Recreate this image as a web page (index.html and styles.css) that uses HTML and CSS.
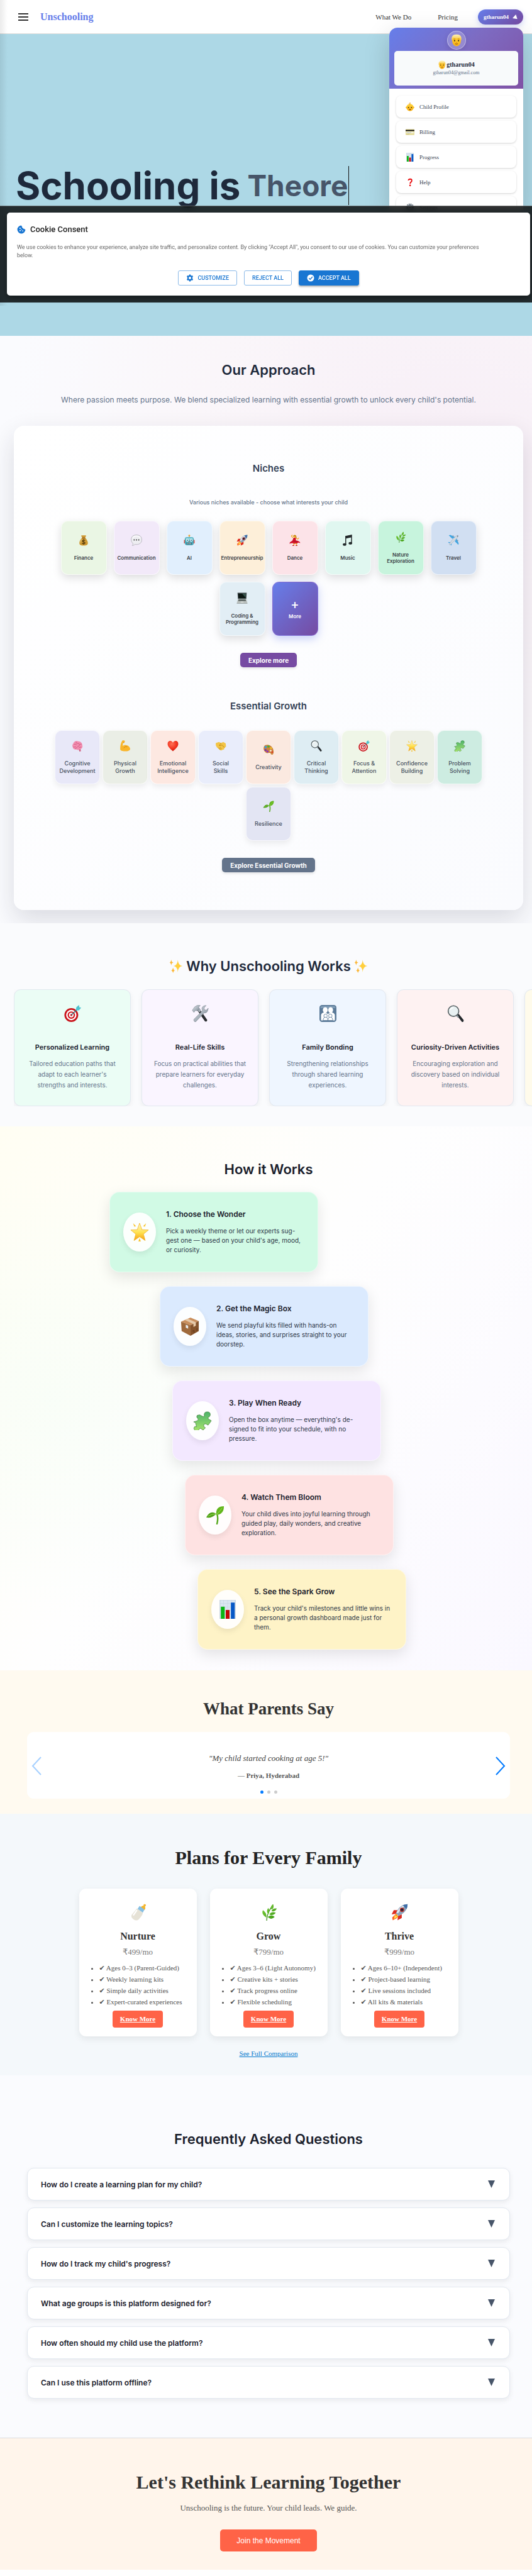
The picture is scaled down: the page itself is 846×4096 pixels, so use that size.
FILE: index.html
```html
<!DOCTYPE html>
<html lang="en">
<head>
<meta charset="utf-8">
<meta name="viewport" content="width=device-width, initial-scale=1">
<title>Unschooling</title>
<link rel="stylesheet" href="styles.css">
</head>
<body>
<svg class="sprite" aria-hidden="true">
  <defs>
    <linearGradient id="skin" x1="0" y1="0" x2="0" y2="1"><stop offset="0" stop-color="#ffd53e"/><stop offset="1" stop-color="#f8b113"/></linearGradient>
    <linearGradient id="hair" x1="0" y1="0" x2="0" y2="1"><stop offset="0" stop-color="#fff3b8"/><stop offset="1" stop-color="#f3bd35"/></linearGradient>
    <linearGradient id="leaf" x1="0" y1="0" x2="1" y2="1"><stop offset="0" stop-color="#7fd03a"/><stop offset="1" stop-color="#3c9a17"/></linearGradient>
    <linearGradient id="gold" x1="0" y1="0" x2="0" y2="1"><stop offset="0" stop-color="#fffbd0"/><stop offset=".55" stop-color="#ffe14d"/><stop offset="1" stop-color="#f59c12"/></linearGradient>
    <linearGradient id="steel" x1="0" y1="0" x2="1" y2="1"><stop offset="0" stop-color="#dfe6ec"/><stop offset="1" stop-color="#76828e"/></linearGradient>
    <linearGradient id="jig" x1="0" y1="0" x2="0" y2="1"><stop offset="0" stop-color="#4db36b"/><stop offset="1" stop-color="#a6e36c"/></linearGradient>
    <radialGradient id="redheart" cx=".4" cy=".3" r=".8"><stop offset="0" stop-color="#ff7256"/><stop offset=".6" stop-color="#f0301c"/><stop offset="1" stop-color="#b8120a"/></radialGradient>
  </defs>
  <symbol id="man" viewBox="0 0 32 32"><path d="M5 17V12C5 5 9 2 16 2s11 3 11 10v5c0 8-5 14-11 14S5 25 5 17z" fill="url(#skin)"/><path d="M4 16C2 6 7 1 16 1s14 5 12 15l-2 1c0-4-1-6-2-7-5 1-11 1-16-1-1 2-2 4-2 8z" fill="url(#hair)"/><circle cx="11" cy="17" r="1.7" fill="#3d2a12"/><circle cx="21" cy="17" r="1.7" fill="#3d2a12"/><path d="M8.500 13.500q2-1.500 4.500-.5M19 13q2.500-1 4.500.5" stroke="#b9791a" stroke-width="1.300" fill="none"/><path d="M14.500 21.500h3" stroke="#d98d16" stroke-width="1.400"/><path d="M12.500 25q3.500 1.500 7 0" stroke="#8a3b12" stroke-width="1.500" fill="none"/></symbol>
  <symbol id="baby" viewBox="0 0 32 32"><circle cx="3.500" cy="18" r="3" fill="#f8b113"/><circle cx="28.500" cy="18" r="3" fill="#f8b113"/><circle cx="16" cy="18" r="13" fill="url(#skin)"/><path d="M16 8c-5-1-4-7 1-7-2 2-1 4 2 4" stroke="#e89a16" stroke-width="1.800" fill="none"/><circle cx="10.500" cy="18" r="2" fill="#3d2a12"/><circle cx="21.500" cy="18" r="2" fill="#3d2a12"/><path d="M12.500 24h7q-1 4-3.500 4t-3.500-4z" fill="#7c2d12"/></symbol>
  <symbol id="card" viewBox="0 0 32 32"><rect x="0" y="5" width="32" height="22" rx="2" fill="#e6dd9c"/><path d="M0 8h32v4.500H0z" fill="#111"/><rect x="3" y="15" width="26" height="5" fill="#f7f5e4"/><path d="M5 18q2-3 3 0t3 0 3 0 3 0 3 0" stroke="#5373b4" fill="none"/><path d="M3 23.500h10" stroke="#b4a862"/></symbol>
  <symbol id="chart" viewBox="0 0 32 32"><rect x="3" y="0" width="26" height="32" fill="#dbe7f2" stroke="#b9c9d8"/><path d="M3 6h26M3 12h26M3 18h26M3 24h26M9 0v32M16 0v32M23 0v32" stroke="#c4d3e1" stroke-width=".6"/><path d="M4.500 11.500h6.500V32H4.500z" fill="#0bb515"/><path d="M12.800 17h6.400v15h-6.400z" fill="#c20808"/><path d="M21.500 4.500H28V32h-6.500z" fill="#0758c6"/></symbol>
  <symbol id="question" viewBox="0 0 32 32"><path d="M10 9q1-5 6.500-5 6 0 6 5.500 0 3-3 5.500t-3 6" stroke="#e8090b" stroke-width="4.200" fill="none"/><circle cx="16.300" cy="27" r="3" fill="#e8090b"/></symbol>
  <symbol id="gear" viewBox="0 0 32 32"><circle cx="16" cy="16" r="12" fill="none" stroke="#7c8790" stroke-width="6" stroke-dasharray="4.200 2.080"/><circle cx="16" cy="16" r="8.500" fill="none" stroke="#64707b" stroke-width="4"/><circle cx="16" cy="16" r="3" fill="#4a545d"/></symbol>
  <symbol id="money" viewBox="0 0 32 32"><path d="M12 9c-1-3-3-4-3-6 3-2 5 0 7-1 2 1 4-1 7 1 0 2-2 3-3 6 5 5 8 10 8 15 0 5-3 7-12 7S4 29 4 24c0-5 3-10 8-15z" fill="#cf9a34"/><path d="M11.500 8.500h9v2.500h-9z" fill="#8c5a17"/><path d="M8 22c0-4 2-7 4-9" stroke="#eecb72" stroke-width="1.800" fill="none"/><path d="M20 17c-1-2-8-2.500-8 1s8 2 8 5.500-7 3.500-8.500.5M16 13.500v15" stroke="#4a3208" stroke-width="1.900" fill="none"/></symbol>
  <symbol id="speech" viewBox="0 0 32 32"><path d="M16 1c9 0 15 5 15 13.500S25 28 16 28q-2 0-4-.5Q9 31 4 31q3-3 2-6-5-4-5-10.500C1 6 7 1 16 1z" fill="#eeeef2" stroke="#a5a4ad" stroke-width="1.200"/><path d="M5 11Q8 4 16 4t11 6" stroke="#fff" stroke-width="2" fill="none"/><circle cx="9.500" cy="15" r="1.700" fill="#333"/><circle cx="16" cy="15" r="1.700" fill="#333"/><circle cx="22.500" cy="15" r="1.700" fill="#333"/></symbol>
  <symbol id="robot" viewBox="0 0 32 32"><path d="M15 3h2v5h-2z" fill="#8896a2"/><circle cx="16" cy="3" r="2.600" fill="#f3a42b"/><path d="M1 15h4v10H1zM27 15h4v10h-4z" fill="#d95247"/><rect x="3.500" y="7" width="25" height="23" rx="6" fill="#4aa7b8"/><rect x="5.500" y="8.500" width="21" height="6" rx="3" fill="#84cfd9"/><circle cx="10.500" cy="16" r="4" fill="#e9fbff"/><circle cx="21.500" cy="16" r="4" fill="#e9fbff"/><circle cx="10.500" cy="16" r="1.900" fill="#13697e"/><circle cx="21.500" cy="16" r="1.900" fill="#13697e"/><path d="M16 18l2 3h-4z" fill="#d95247"/><rect x="9" y="23" width="14" height="4.500" rx="1" fill="#274f5b"/><path d="M12 23v4.500M16 23v4.500M20 23v4.500" stroke="#fff" stroke-width="1.500"/></symbol>
  <symbol id="rocket" viewBox="0 0 32 32"><path d="M10 18L3 31l11-6z" fill="#ffab1a"/><path d="M9 19L2 26l1 5 8-4z" fill="#ff5a1f"/><path d="M7 21l-2 8 7-4z" fill="#ffe04d"/><path d="M12 12L5 12 1 20l8-1zM20 20v7l-8 4 1-8z" fill="#dc2a1e"/><path d="M31 1c-9 0-17 5-22 17l5 5C26 18 31 10 31 1z" fill="#8ba3bb"/><path d="M31 1C23 2 15 7 10 17l3 1C18 11 24 5 31 1z" fill="#e0eaf2"/><path d="M31 1q-5 0-9 2l7 7q2-4 2-9z" fill="#3d6ea8"/><circle cx="20.500" cy="11.500" r="4" fill="#c32a22"/><circle cx="20.500" cy="11.500" r="2.500" fill="#1d2737"/></symbol>
  <symbol id="dancer" viewBox="0 0 32 32"><path d="M10 9L6 4l3-3M17 9l7 4 3-4" stroke="#f0ac2a" stroke-width="2.200" fill="none"/><circle cx="15" cy="5" r="3.800" fill="#ffc93a"/><path d="M11 6c0-6 8-7 9-1l1 6-3-1-1-5z" fill="#c98a1c"/><path d="M12 9h6l1 8c6 0 11 3 12 7-3 0-5-2-7-1-1 3-4 4-6 2-3 3-6 2-8-1-3 1-6 0-9 2 0-6 5-6 8-9z" fill="#d3122b"/><path d="M10 17q6 4 13 4" stroke="#8b0b1e" fill="none"/><path d="M14 24l-2 6M18 24l3 4-1 3" stroke="#f0ac2a" stroke-width="2.400" fill="none"/><path d="M9 31h5M18 31h5" stroke="#b50e22" stroke-width="1.800"/></symbol>
  <symbol id="music" viewBox="0 0 32 32"><path d="M9 4l19-4v24h-2.500V8L11.500 11v17H9z" fill="#23292b"/><ellipse cx="7" cy="28" rx="5" ry="3.600" fill="#23292b"/><ellipse cx="23.500" cy="24.500" rx="5" ry="3.600" fill="#23292b"/></symbol>
  <symbol id="herb" viewBox="0 0 32 32"><path d="M12 32Q12 18 24 2" stroke="#3f8c1d" stroke-width="1.500" fill="none"/><g fill="url(#leaf)"><path d="M24 1q-6 4-3 10 6-3 3-10zM15 8q-5 6 0 12 4-6 0-12zM5 12q-4 7 6 14 2-8-6-14zM31 9q-8-1-10 5 7 2 10-5zM29 17q-8-3-12 3 7 4 12-3zM27 25q-6-6-13 0 6 7 13 0z"/></g></symbol>
  <symbol id="plane" viewBox="0 0 32 32"><path d="M13 12L3 2l4-1 14 6zM20 19l10 10 1-4-6-14z" fill="#43a5e0"/><path d="M5 24l-4-1 2-2 6 1zM8 27l1 4 2-2-1-6z" fill="#43a5e0"/><path d="M29 2c2 2-1 6-5 10L9 27c-3 3-5 3-4-1C9 19 24 1 29 2z" fill="#d3dbe3" stroke="#8d99a5" stroke-width=".8"/><path d="M27 3q3 0 2 2l-3 1z" fill="#3c4f63"/><circle cx="28" cy="17" r="1.800" fill="#8d99a5"/><circle cx="15" cy="4" r="1.800" fill="#8d99a5"/></symbol>
  <symbol id="laptop" viewBox="0 0 32 32"><path d="M3 1h26l-1 17H4z" fill="#454e52"/><path d="M5 3h22l-1 14H6z" fill="#0c1713"/><path d="M16 3h11l-1 12z" fill="#35524a"/><path d="M4 18h24l3 12H1z" fill="#bcc2c0"/><path d="M6 19.500h20l1 5H5z" fill="#5c6462"/><path d="M12 26h8v2.500h-8z" fill="#dfe3e1"/><path d="M1 30h30v1.500H1z" fill="#8b9391"/></symbol>
  <symbol id="brain" viewBox="0 0 32 32"><path d="M20 26l2 6 4-1-1-7z" fill="#d0607f"/><path d="M4 10C6 3 13 1 18 3c7-1 12 5 12 11 2 5-1 10-6 11-3 3-8 3-11 1-5 1-10-2-10-7-2-3-1-7 1-9z" fill="#f28fb0"/><path d="M6 12q5-3 8 1M12 4q0 5 5 5t5 4M28 11q-5-1-6 3t-6 4M4 19q6 2 8-2M10 25q1-5 6-4M27 20q-4-2-7 2" stroke="#cf557f" stroke-width="1.600" fill="none"/></symbol>
  <symbol id="muscle" viewBox="0 0 32 32"><path d="M8 1c4-1 8 0 7 3l-2 4-3-1-1 9q5-4 11-2 7 1 10 9c1 5-4 8-12 8-8 0-14-1-16-5C2 17 3 9 8 1z" fill="#f9b52a"/><path d="M12 22q4-6 10-4M11 8l2-3" stroke="#c77c10" stroke-width="1.500" fill="none"/></symbol>
  <symbol id="heart" viewBox="0 0 32 32"><path d="M16 31C8 24 1 18 1 10 1 1 12-1 16 7c4-8 15-6 15 3 0 8-7 14-15 21z" fill="url(#redheart)"/></symbol>
  <symbol id="handshake" viewBox="0 0 32 32"><path d="M2 8l9-3 6 3 6-3 7 4 1 9-4 3-2 5-4 1-3 2-4-1-9-8-3-6z" fill="#f3c547"/><path d="M17 8l-5 7q4 2 7-2l8 8M14 20l4 5M10 21l5 6" stroke="#b98412" stroke-width="1.600" fill="none"/></symbol>
  <symbol id="palette" viewBox="0 0 32 32"><path d="M7 3c8-3 17 1 21 9 3 7 4 16-1 18-5 1-4-5-8-5-5 0-7 3-12-2C0 17 1 6 7 3z" fill="#c9833c"/><ellipse cx="22" cy="19" rx="3" ry="2.500" fill="#f8e4d4"/><circle cx="8" cy="9" r="3.200" fill="#2aa0e8"/><circle cx="16" cy="7" r="3.200" fill="#43b62d"/><circle cx="23" cy="11.500" r="2.800" fill="#f5c32b"/><circle cx="7.500" cy="17" r="3" fill="#6d29b8"/><circle cx="13" cy="21" r="3" fill="#8a2cc4"/><circle cx="26.500" cy="23" r="2.500" fill="#e03b2e"/></symbol>
  <symbol id="magnifier" viewBox="0 0 32 32"><path d="M18 19l4-2 9 11q1 4-3 4z" fill="#24292d"/><path d="M17 18l4 5" stroke="#8d999f" stroke-width="3"/><circle cx="12" cy="11.500" r="10" fill="#e9f1f2" stroke="#586265" stroke-width="2"/><path d="M6 9q2-4 6-4" stroke="#fff" stroke-width="2" fill="none"/></symbol>
  <symbol id="target" viewBox="0 0 32 32"><circle cx="13.500" cy="19" r="13" fill="#c9141b"/><circle cx="13.500" cy="19" r="9.700" fill="#fff"/><circle cx="13.500" cy="19" r="7" fill="#d3161d"/><circle cx="13.500" cy="19" r="4.400" fill="#fff"/><circle cx="13.500" cy="19" r="2" fill="#d3161d"/><path d="M13.500 19L25 8" stroke="#28747c" stroke-width="1.600"/><path d="M22 10l1-6 5-4 .5 4 3.500 1-4 5z" fill="#4fc3cf"/></symbol>
  <symbol id="star" viewBox="0 0 32 32"><path d="M16 1l4 11 11 .5-8.500 7 3 11L16 24l-9.500 6.500 3-11L1 12.500 12 12z" fill="url(#gold)" stroke="#f2b01c" stroke-width=".8"/><path d="M5 1l5 5-3 1zM27 1l-5 5 3 1zM16 26l2 6h-4z" fill="#f8c42d"/></symbol>
  <symbol id="puzzle" viewBox="0 0 32 32"><path d="M11 6l6 3q2 1 2-1-1-7 5-7t5 6q-1 3-3 3-1 1 0 3l5 3-5 7q-1 1-3-1-4-2-5 2 0 3 3 4l-4 4-4-3q-1-1-3 2-1 3-5 2-5-2-3-6 1-2 4-1l-2-7-3-1q4-1 6-2 3-1 1-4-3-2-1-5z" fill="url(#jig)" stroke="#3f7f3a" stroke-width=".8"/></symbol>
  <symbol id="seedling" viewBox="0 0 32 32"><path d="M19 13q3 9 0 19" stroke="#57a81e" stroke-width="2.600" fill="none"/><path d="M18 16C17 5 22 1 31 1c0 9-4 14-13 15z" fill="#62b61c"/><path d="M18 14Q8 7 1 20q9 2 17-6z" fill="#4ea017"/><path d="M19 15q5-6 9-11M4 18q7-4 13-4" stroke="#a1dd5c" fill="none"/></symbol>
  <symbol id="sparkles" viewBox="0 0 32 32"><path d="M20 2q1 13 11 14-10 1-11 14-1-13-10-14 9-1 10-14z" fill="#ffcf3d"/><path d="M5 1q0 6 5 7-5 1-5 7-1-6-4-7 3-1 4-7zM9 20q1 5 4 6-3 1-4 6-1-5-4-6 3-1 4-6z" fill="#fbb83a"/></symbol>
  <symbol id="tools" viewBox="0 0 32 32"><path d="M9 8l4-3 16 23q0 4-4 3z" fill="#2a2d31"/><path d="M10 8l4-3 4 6-4 3z" fill="#a3acb5"/><path d="M1 10L5 4q5-5 11-3l-3 3 1 4-5 3-2-1-3 4z" fill="url(#steel)" stroke="#6d7882" stroke-width=".6"/><path d="M27 1q-6 0-8 5l1 5L4 27q-1 4 3 5l16-17q7 1 8-9l-4 4-4-2 1-4z" fill="url(#steel)" stroke="#6d7882" stroke-width=".6"/></symbol>
  <symbol id="family" viewBox="0 0 32 32"><rect width="32" height="32" rx="5" fill="#5b7a98"/><path d="M2 5q0-3 3-3h22q3 0 3 3v1H2z" fill="#7f9cb6"/><g fill="#fff"><ellipse cx="11" cy="9.500" rx="4.600" ry="5.500"/><ellipse cx="21" cy="9.500" rx="4.600" ry="5.500"/><path d="M3 29V19q1-5 8-5l5 3 5-3q7 0 8 5v10z"/></g><g fill="#fff" stroke="#5b7a98"><circle cx="11.500" cy="20.500" r="3.300"/><circle cx="20.500" cy="20.500" r="3.300"/><path d="M7 29q0-6 4.500-6t4.500 6q0-6 4.500-6t4.500 6z"/></g></symbol>
  <symbol id="box" viewBox="0 0 32 32"><path d="M17 1l14 6-14 7L1 8z" fill="#c98f5e"/><path d="M1 8l16 6v18L2 24z" fill="#9f6a3d"/><path d="M17 14l14-7v17l-14 8z" fill="#85532b"/><path d="M7 5l5-2 14 6v6l-4 2v-5z" fill="#e5c8a8"/><path d="M9 13l4 2v5l-4-2z" fill="#e8edf0"/><path d="M20 24l3-1v4M28 19v5" stroke="#5b3517" fill="none"/></symbol>
  <symbol id="bottle" viewBox="0 0 32 32"><path d="M27 1q4-1 4 2l-2 3q2 3-1 6l-7-5q2-4 5-3z" fill="#f3b52d"/><path d="M19 4l9 7-3 6-10-7z" fill="#85bfe4"/><path d="M14 9l11 8q0 4-3 7l-5 6q-4 3-9 0-6-4-4-9z" fill="#e6e2d6"/><path d="M14 12L7 22" stroke="#fff" stroke-width="2.500"/></symbol>
</svg>

<header class="topbar">
  <button class="burger" type="button" aria-label="Open menu"><span></span><span></span><span></span></button>
  <a class="brand" href="#">Unschooling</a>
  <nav class="nav"><a href="#why">What We Do</a><a href="#plans">Pricing</a></nav>
  <div class="account">
    <button class="pill" type="button" aria-expanded="true">gtharun04
      <svg class="pill-arrow" viewBox="0 0 12 12"><path d="M8 0l3.500 11L0 9z" fill="#fff"/></svg>
    </button>
    <div class="menu">
      <div class="menu-head">
        <div class="avatar"><svg class="e20"><use href="#man"/></svg></div>
        <div class="identity">
          <p class="identity-name"><svg class="e14"><use href="#man"/></svg>gtharun04</p>
          <p class="identity-mail">gtharun04@gmail.com</p>
        </div>
      </div>
      <div class="menu-list">
        <a class="menu-item" href="#"><svg class="e14"><use href="#baby"/></svg>Child Profile</a>
        <a class="menu-item" href="#"><svg class="e14"><use href="#card"/></svg>Billing</a>
        <a class="menu-item" href="#"><svg class="e14"><use href="#chart"/></svg>Progress</a>
        <a class="menu-item" href="#"><svg class="e14"><use href="#question"/></svg>Help</a>
        <a class="menu-item" href="#"><svg class="e14"><use href="#gear"/></svg>Settings</a>
      </div>
    </div>
  </div>
</header>

<section class="hero">
  <h1 class="hero-title">Schooling is <span class="typed">Theore</span></h1>
</section>

<div class="consent" role="dialog" aria-labelledby="consent-title">
  <div class="consent-card">
    <h2 class="consent-title" id="consent-title">
      <svg class="e14" viewBox="0 0 24 24"><path d="M12 1a11 11 0 1 0 11 11q-2 0-3-2-3 1-3-2-4 0-3-4-2-1-2-3z" fill="#1976d2"/><circle cx="8.500" cy="8.500" r="1.700" fill="#fff"/><circle cx="8.500" cy="15" r="1.700" fill="#fff"/><circle cx="15.500" cy="15.500" r="1.500" fill="#fff"/><circle cx="12" cy="12" r="1.100" fill="#fff"/></svg>
      Cookie Consent
    </h2>
    <p class="consent-text">We use cookies to enhance your experience, analyze site traffic, and personalize content. By clicking "Accept All", you consent to our use of cookies. You can customize your preferences<br>below.</p>
    <div class="consent-actions">
      <button class="mui" type="button"><svg class="e12" viewBox="0 0 24 24"><path fill="#1976d2" fill-rule="evenodd" d="M10 1h4l1 3 2 1 3-1 2 4-2 2v4l2 2-2 4-3-1-2 1-1 3h-4l-1-3-2-1-3 1-2-4 2-2v-4L2 8l2-4 3 1 2-1zM12 8a4 4 0 1 0 0 8 4 4 0 0 0 0-8z"/></svg>CUSTOMIZE</button>
      <button class="mui" type="button">REJECT ALL</button>
      <button class="mui mui-solid" type="button"><svg class="e12" viewBox="0 0 24 24"><circle cx="12" cy="12" r="11" fill="#fff"/><path d="M6.500 12.500l4 4 7.500-8.500" stroke="#1976d2" stroke-width="2.500" fill="none"/></svg>ACCEPT ALL</button>
    </div>
  </div>
</div>

<section class="approach">
  <h2 class="heading">Our Approach</h2>
  <p class="lead">Where passion meets purpose. We blend specialized learning with essential growth to unlock every child's potential.</p>
  <div class="panel">
    <h3 class="subheading">Niches</h3>
    <p class="hint">Various niches available - choose what interests your child</p>
    <div class="niches">
      <div class="niche lime"><svg class="e18"><use href="#money"/></svg>Finance</div>
      <div class="niche lilac"><svg class="e18"><use href="#speech"/></svg>Communication</div>
      <div class="niche sky"><svg class="e18"><use href="#robot"/></svg>AI</div>
      <div class="niche sand"><svg class="e18"><use href="#rocket"/></svg>Entrepreneurship</div>
      <div class="niche rose"><svg class="e18"><use href="#dancer"/></svg>Dance</div>
      <div class="niche aqua"><svg class="e18"><use href="#music"/></svg>Music</div>
      <div class="niche mint"><svg class="e18"><use href="#herb"/></svg>Nature Exploration</div>
      <div class="niche blue"><svg class="e18"><use href="#plane"/></svg>Travel</div>
      <div class="niche ice"><svg class="e18"><use href="#laptop"/></svg>Coding &amp; Programming</div>
      <a class="niche more" href="#"><span class="plus">+</span>More</a>
    </div>
    <button class="explore violet" type="button">Explore more</button>
    <h3 class="subheading second">Essential Growth</h3>
    <div class="growths">
      <div class="growth g1"><svg class="e18"><use href="#brain"/></svg>Cognitive Development</div>
      <div class="growth g2"><svg class="e18"><use href="#muscle"/></svg>Physical<br>Growth</div>
      <div class="growth g3"><svg class="e18"><use href="#heart"/></svg>Emotional Intelligence</div>
      <div class="growth g4"><svg class="e18"><use href="#handshake"/></svg>Social<br>Skills</div>
      <div class="growth g5"><svg class="e18"><use href="#palette"/></svg>Creativity</div>
      <div class="growth g6"><svg class="e18"><use href="#magnifier"/></svg>Critical<br>Thinking</div>
      <div class="growth g7"><svg class="e18"><use href="#target"/></svg>Focus &amp;<br>Attention</div>
      <div class="growth g8"><svg class="e18"><use href="#star"/></svg>Confidence Building</div>
      <div class="growth g9"><svg class="e18"><use href="#puzzle"/></svg>Problem<br>Solving</div>
      <div class="growth g10"><svg class="e18"><use href="#seedling"/></svg>Resilience</div>
    </div>
    <button class="explore slate" type="button">Explore Essential Growth</button>
  </div>
</section>

<section class="why" id="why">
  <h2 class="heading sparkle"><svg class="e22"><use href="#sparkles"/></svg>Why Unschooling Works<svg class="e22"><use href="#sparkles"/></svg></h2>
  <div class="strip">
    <article class="reason r1"><svg class="e27"><use href="#target"/></svg><h3>Personalized Learning</h3><p>Tailored education paths that adapt to each learner's strengths and interests.</p></article>
    <article class="reason r2"><svg class="e27"><use href="#tools"/></svg><h3>Real-Life Skills</h3><p>Focus on practical abilities that prepare learners for everyday challenges.</p></article>
    <article class="reason r3"><svg class="e27"><use href="#family"/></svg><h3>Family Bonding</h3><p>Strengthening relationships through shared learning experiences.</p></article>
    <article class="reason r4"><svg class="e27"><use href="#magnifier"/></svg><h3>Curiosity-Driven Activities</h3><p>Encouraging exploration and discovery based on individual interests.</p></article>
    <article class="reason r5"></article>
  </div>
</section>

<section class="how">
  <h2 class="heading">How it Works</h2>
  <ol class="steps">
    <li class="step s1"><span class="bubble"><svg class="e30"><use href="#star"/></svg></span><div><h3>1. Choose the Wonder</h3><p>Pick a weekly theme or let our experts sug-<br>gest one — based on your child's age, mood,<br>or curiosity.</p></div></li>
    <li class="step s2"><span class="bubble"><svg class="e30"><use href="#box"/></svg></span><div><h3>2. Get the Magic Box</h3><p>We send playful kits filled with hands-on<br>ideas, stories, and surprises straight to your<br>doorstep.</p></div></li>
    <li class="step s3"><span class="bubble"><svg class="e30"><use href="#puzzle"/></svg></span><div><h3>3. Play When Ready</h3><p>Open the box anytime — everything's de-<br>signed to fit into your schedule, with no<br>pressure.</p></div></li>
    <li class="step s4"><span class="bubble"><svg class="e30"><use href="#seedling"/></svg></span><div><h3>4. Watch Them Bloom</h3><p>Your child dives into joyful learning through<br>guided play, daily wonders, and creative<br>exploration.</p></div></li>
    <li class="step s5"><span class="bubble"><svg class="e30"><use href="#chart"/></svg></span><div><h3>5. See the Spark Grow</h3><p>Track your child's milestones and little wins in<br>a personal growth dashboard made just for<br>them.</p></div></li>
  </ol>
</section>

<section class="parents">
  <h2>What Parents Say</h2>
  <div class="slider">
    <button class="arrow prev" type="button" aria-label="Previous" disabled><svg viewBox="0 0 16 30"><path d="M15 1L2 15l13 14" fill="none" stroke="#007aff" stroke-width="2"/></svg></button>
    <blockquote>"My child started cooking at age 5!"</blockquote>
    <p class="author">— Priya, Hyderabad</p>
    <div class="dots"><span class="dot on"></span><span class="dot"></span><span class="dot"></span></div>
    <button class="arrow next" type="button" aria-label="Next"><svg viewBox="0 0 16 30"><path d="M1 1l13 14L1 29" fill="none" stroke="#007aff" stroke-width="2"/></svg></button>
  </div>
</section>

<section class="plans" id="plans">
  <h2>Plans for Every Family</h2>
  <div class="plan-row">
    <article class="plan"><svg class="e27"><use href="#bottle"/></svg><h3>Nurture</h3><p class="price">₹499/mo</p>
      <ul><li>✔ Ages 0–3 (Parent-Guided)</li><li>✔ Weekly learning kits</li><li>✔ Simple daily activities</li><li>✔ Expert-curated experiences</li></ul><a class="know" href="#">Know More</a></article>
    <article class="plan"><svg class="e27"><use href="#herb"/></svg><h3>Grow</h3><p class="price">₹799/mo</p>
      <ul><li>✔ Ages 3–6 (Light Autonomy)</li><li>✔ Creative kits + stories</li><li>✔ Track progress online</li><li>✔ Flexible scheduling</li></ul><a class="know" href="#">Know More</a></article>
    <article class="plan"><svg class="e27"><use href="#rocket"/></svg><h3>Thrive</h3><p class="price">₹999/mo</p>
      <ul><li>✔ Ages 6–10+ (Independent)</li><li>✔ Project-based learning</li><li>✔ Live sessions included</li><li>✔ All kits &amp; materials</li></ul><a class="know" href="#">Know More</a></article>
  </div>
  <a class="compare" href="#">See Full Comparison</a>
</section>

<section class="faq">
  <h2 class="heading">Frequently Asked Questions</h2>
  <div class="faq-list">
    <button class="faq-item" type="button">How do I create a learning plan for my child?<svg class="caret" viewBox="0 0 11 12"><path d="M0 0h11L5.500 12z"/></svg></button>
    <button class="faq-item" type="button">Can I customize the learning topics?<svg class="caret" viewBox="0 0 11 12"><path d="M0 0h11L5.500 12z"/></svg></button>
    <button class="faq-item" type="button">How do I track my child's progress?<svg class="caret" viewBox="0 0 11 12"><path d="M0 0h11L5.500 12z"/></svg></button>
    <button class="faq-item" type="button">What age groups is this platform designed for?<svg class="caret" viewBox="0 0 11 12"><path d="M0 0h11L5.500 12z"/></svg></button>
    <button class="faq-item" type="button">How often should my child use the platform?<svg class="caret" viewBox="0 0 11 12"><path d="M0 0h11L5.500 12z"/></svg></button>
    <button class="faq-item" type="button">Can I use this platform offline?<svg class="caret" viewBox="0 0 11 12"><path d="M0 0h11L5.500 12z"/></svg></button>
  </div>
</section>

<section class="cta">
  <h2>Let's Rethink Learning Together</h2>
  <p>Unschooling is the future. Your child leads. We guide.</p>
  <button class="join" type="button">Join the Movement</button>
</section>
</body>
</html>
```
FILE: styles.css
```css
:root {
  --sans: Inter, "Liberation Sans", sans-serif;
  --serif: "Liberation Serif", "DejaVu Sans", serif;
  --ink: #1e293b;
  --slate: #64748b;
  --tomato: #ff6347;
}

* { box-sizing: border-box; }
body { margin: 0; background: #fff; font-family: var(--serif); position: relative; }
h1, h2, h3, p, ul, ol, blockquote { margin: 0; padding: 0; }
button { font: inherit; cursor: pointer; }
svg { display: block; flex: none; }
.sprite { position: absolute; width: 0; height: 0; }

.e12 { width: 12px; height: 12px; }
.e14 { width: 14px; height: 14px; }
.e18 { width: 18px; height: 18px; }
.e20 { width: 20px; height: 20px; }
.e22 { width: 22px; height: 22px; }
.e27 { width: 27px; height: 27px; }
.e30 { width: 30px; height: 30px; }

/* Soft edge cast by the closed side drawer */
body::before {
  content: "";
  position: absolute;
  z-index: 15;
  left: 0;
  top: 0;
  width: 12px;
  height: 486px;
  background: linear-gradient(90deg, rgba(0, 0, 0, .08), rgba(0, 0, 0, 0));
}

/* Top bar */
.topbar {
  position: relative;
  z-index: 10;
  display: flex;
  align-items: center;
  height: 54px;
  padding: 0 14px 0 29px;
  background: #fff;
  border-bottom: 1px solid #e5e0dc;
}
.burger {
  display: flex;
  flex-direction: column;
  gap: 3px;
  width: 16px;
  padding: 0;
  border: 0;
  background: none;
}
.burger span { height: 2px; background: #333; }
.brand { margin-left: 19px; font-size: 16px; font-weight: 700; color: #667eea; text-decoration: none; }
.nav { display: flex; gap: 42px; margin-left: auto; }
.nav a { font-size: 11px; color: #333; text-decoration: none; }
.account { margin-left: 32px; }
.pill {
  display: flex;
  align-items: center;
  gap: 6px;
  height: 24px;
  padding: 0 9px;
  border: 0;
  border-radius: 12px;
  background: linear-gradient(135deg, #667eea, #764ba2);
  box-shadow: 0 3px 10px rgba(102, 126, 234, .3);
  color: #fff;
  font-size: 9px;
  font-weight: 700;
}
.pill-arrow { width: 8px; height: 8px; }

.menu {
  position: absolute;
  top: 44px;
  right: 14px;
  width: 213px;
  background: #fff;
  border-radius: 13px 13px 0 0;
  box-shadow: 0 13px 40px rgba(0, 0, 0, .18);
  overflow: hidden;
  height: 290px;
}
.menu-head { padding: 5px 8px; background: linear-gradient(135deg, #667eea, #7d6bc2 50%, #8052a5); }
.avatar {
  display: grid;
  place-items: center;
  width: 30px;
  height: 30px;
  margin: 0 auto 2px;
  border: 1px solid rgba(255, 255, 255, .4);
  border-radius: 50%;
  background: rgba(255, 255, 255, .2);
  box-shadow: 0 3px 8px rgba(0, 0, 0, .1);
}
.identity {
  display: flex;
  flex-direction: column;
  align-items: center;
  justify-content: center;
  height: 55px;
  border-radius: 5px;
  background: #f8fafb;
}
.identity-name { display: flex; align-items: center; font-size: 10px; line-height: 12px; font-weight: 700; color: var(--ink); }
.identity-mail { font-size: 8px; line-height: 11px; color: var(--slate); }
.menu-list { display: flex; flex-direction: column; gap: 5px; padding: 11px; }
.menu-item {
  display: flex;
  align-items: center;
  gap: 8px;
  flex: none;
  height: 35px;
  padding: 0 15px;
  border-radius: 8px;
  background: #fff;
  box-shadow: 0 1px 3px rgba(0, 0, 0, .18);
  color: #374151;
  font-size: 9px;
  text-decoration: none;
}

/* Hero */
.hero { height: 480px; padding: 193px 25px 0; background: #add8e6; }
.hero-title {
  display: flex;
  align-items: center;
  gap: 11px;
  font-family: var(--sans);
  font-size: 60px;
  line-height: 96px;
  font-weight: 700;
  color: var(--ink);
  white-space: nowrap;
}
.typed { padding-right: 1px; border-right: 1px solid #111; font-size: 46px; line-height: 62px; font-weight: 700; color: #475569; }

/* Cookie consent */
.consent {
  position: absolute;
  z-index: 20;
  top: 327px;
  left: 0;
  right: 0;
  padding: 10px 3px 11px 11px;
  border-top: 1px solid rgba(255, 255, 255, .3);
  background: rgba(0, 0, 0, .8);
  backdrop-filter: blur(6px);
  font-family: Roboto, "Liberation Sans", sans-serif;
}
.consent-card { padding: 18px 16px 16px; border-radius: 5px; background: #fff; box-shadow: 0 4px 8px rgba(0, 0, 0, .4); }
.consent-title { display: flex; align-items: center; gap: 7px; font-size: 13px; line-height: 18px; font-weight: 500; color: #222; }
.consent-text { margin-top: 13px; font-size: 9px; line-height: 13px; color: #666; }
.consent-actions { display: flex; justify-content: center; gap: 11px; margin-top: 17px; }
.mui {
  display: flex;
  align-items: center;
  gap: 6px;
  height: 24px;
  padding: 0 12px;
  border: 1px solid #8cbae8;
  border-radius: 3px;
  background: #fff;
  color: #1976d2;
  font-size: 9px;
  font-weight: 500;
}
.mui-solid { border-color: #1976d2; background: #1976d2; color: #fff; box-shadow: 0 2px 3px rgba(0, 0, 0, .3); }

/* Shared headings */
.heading { font-family: var(--sans); font-size: 22px; line-height: 28px; font-weight: 600; color: var(--ink); text-align: center; }
.subheading { font-family: var(--sans); font-size: 15px; line-height: 20px; font-weight: 600; color: #334155; text-align: center; }

/* Approach */
.approach {
  padding: 40px 14px 21px 22px;
  background: radial-gradient(circle at 85% 22%, #f7eef6, rgba(250, 244, 248, .7) 40%, rgba(251, 252, 254, 0) 70%), #fafbfe;
  overflow: hidden;
}
.lead { margin-top: 24px; font-family: var(--sans); font-size: 12px; line-height: 20px; color: var(--slate); text-align: center; }
.panel {
  display: flex;
  flex-direction: column;
  align-items: center;
  margin-top: 31px;
  padding: 58px 58px 60px;
  border-radius: 16px;
  background: linear-gradient(135deg, #fff, #fafbfe);
  box-shadow: 0 16px 40px rgba(30, 30, 50, .14);
  font-family: var(--sans);
}
.hint { margin-top: 37px; font-size: 9px; line-height: 14px; font-weight: 500; color: var(--slate); }
.niches { display: flex; flex-wrap: wrap; justify-content: center; gap: 11px; margin-top: 22px; }
.niche {
  display: flex;
  flex-direction: column;
  align-items: center;
  justify-content: center;
  gap: 14px;
  width: 73px;
  height: 86px;
  border: 1px solid rgba(255, 255, 255, .6);
  border-radius: 11px;
  box-shadow: 0 5px 14px rgba(0, 0, 0, .13);
  color: #3b4248;
  font-size: 8px;
  line-height: 10px;
  font-weight: 600;
  text-align: center;
  text-decoration: none;
}
.lime { background: #eaf6e4; }
.lilac { background: #f2e9f9; }
.sky { background: #e1effd; }
.sand { background: #fdefd9; }
.rose { background: #fce3e8; }
.aqua { background: #e0f7f0; }
.mint { background: #c7f4dd; }
.blue { background: #d1dff2; }
.ice { background: #e2eef5; }
.more { gap: 4px; border-color: rgba(150, 120, 220, .6); background: linear-gradient(135deg, #667eea, #764ba2); box-shadow: 0 5px 14px rgba(102, 126, 234, .35); color: #fff; }
.plus { font-size: 20px; line-height: 20px; font-weight: 500; }
.explore {
  height: 23px;
  margin-top: 27px;
  padding: 0 13px;
  border: 0;
  border-radius: 5px;
  color: #fff;
  font-size: 10px;
  font-weight: 700;
  box-shadow: 0 2px 4px rgba(0, 0, 0, .1);
}
.violet { background: #764ba2; }
.slate { background: #64748b; }
.second { margin-top: 52px; }
.growths { display: flex; flex-wrap: wrap; justify-content: center; gap: 4px; margin-top: 28px; }
.growth {
  display: flex;
  flex-direction: column;
  align-items: center;
  justify-content: center;
  gap: 13px;
  width: 72px;
  height: 86px;
  border: 1px solid rgba(255, 255, 255, .7);
  border-radius: 11px;
  box-shadow: 0 4px 10px rgba(0, 0, 0, .07);
  color: #475060;
  font-size: 9px;
  line-height: 12px;
  font-weight: 500;
  text-align: center;
}
.g1 { background: #e8e8f8; }
.g2 { background: #eaeee6; }
.g3 { background: #fde8e1; }
.g4 { background: #e9edfb; }
.g5 { background: #fbe9e0; }
.g6 { background: #deedf3; }
.g7 { background: #eff6e7; }
.g8 { background: #edf0e6; }
.g9 { background: #cdece1; }
.g10 { background: #e3e5f3; }

/* Why */
.why { padding: 54px 0 32px 22px; background: #fafbfd; }
.sparkle { display: flex; align-items: center; justify-content: center; gap: 5px; padding-right: 14px; }
.strip { display: flex; gap: 17px; margin-top: 23px; overflow: hidden; }
.reason {
  display: flex;
  flex-direction: column;
  align-items: center;
  flex: 0 0 186px;
  height: 186px;
  padding: 24px 14px 0;
  border: 1px solid #e2e8f0;
  border-radius: 11px;
  box-shadow: 0 3px 8px rgba(0, 0, 0, .06);
  font-family: var(--sans);
  text-align: center;
}
.reason h3 { margin-top: 32px; font-size: 11px; line-height: 16px; font-weight: 600; color: #1a202c; white-space: nowrap; }
.reason p { margin-top: 10px; font-size: 10px; line-height: 17px; color: #64748b; }
.r1 { background: #ebfdf5; }
.r2 { background: #faf5ff; }
.r3 { background: #eff6ff; }
.r4 { background: #fef2f2; }
.r5 { background: #fffbeb; }

/* How it works */
.how {
  padding: 54px 14px 33px 22px;
  background: radial-gradient(circle at 10% 50%, rgba(240, 253, 244, .4), rgba(255, 255, 255, 0) 40%), linear-gradient(125deg, #fffef3, #fefefe 45%, #faf8ff);
}
.how .heading { color: #1a202c; }
.steps { display: flex; flex-direction: column; gap: 22px; max-width: 506px; margin: 22px auto 0; list-style: none; }
.step {
  display: flex;
  align-items: center;
  gap: 16px;
  width: 332px;
  height: 128px;
  padding: 0 14px 0 21px;
  border: 1px solid rgba(255, 255, 255, .5);
  border-radius: 16px;
  box-shadow: 0 8px 22px rgba(0, 0, 0, .1);
  font-family: var(--sans);
}
.bubble {
  display: grid;
  place-items: center;
  flex: none;
  width: 52px;
  height: 62px;
  border-radius: 50%;
  background: rgba(255, 255, 255, .92);
  box-shadow: 0 4px 10px rgba(0, 0, 0, .08);
}
.step h3 { font-size: 12px; line-height: 16px; font-weight: 600; color: #1a202c; }
.step p { margin-top: 11px; font-size: 10px; line-height: 15px; color: #2d3748; white-space: nowrap; }
.s1 { background: #d1fae5; }
.s2 { margin-left: 80px; background: #dbeafe; }
.s3 { margin-left: 100px; background: #f3e8ff; }
.s4 { margin-left: 120px; background: #fee2e2; }
.s5 { margin-left: 140px; background: #fef3c7; }

/* Parents */
.parents { padding: 45px 35px 24px 43px; background: #fffaf0; text-align: center; }
.parents h2 { font-size: 27px; line-height: 32px; color: #333; }
.slider { position: relative; margin-top: 21px; padding: 34px 40px 8px; border-radius: 11px; background: #fff; }
.slider blockquote { font-size: 13px; line-height: 16px; font-style: italic; color: #444; }
.author { margin-top: 12px; font-size: 11px; line-height: 14px; font-weight: 700; color: #555; }
.dots { display: flex; justify-content: center; gap: 6px; margin-top: 17px; }
.dot { width: 5px; height: 5px; border-radius: 50%; background: #ccc; }
.on { background: #007aff; }
.arrow { position: absolute; top: 39px; width: 16px; height: 30px; padding: 0; border: 0; background: none; }
.prev { left: 7px; opacity: .35; }
.next { right: 7px; }

/* Plans */
.plans {
  display: flex;
  flex-direction: column;
  align-items: center;
  padding: 52px 14px 28px 22px;
  background: #f4f8fb;
}
.plans h2 { font-size: 30px; line-height: 36px; color: #222; }
.plan-row { display: flex; justify-content: center; gap: 21px; margin-top: 31px; }
.plan {
  display: flex;
  flex-direction: column;
  align-items: center;
  width: 187px;
  padding: 24px 16px 14px;
  border-radius: 11px;
  background: #fff;
  box-shadow: 0 4px 12px rgba(0, 0, 0, .08);
}
.plan h3 { margin-top: 15px; font-size: 16px; line-height: 20px; color: #333; }
.price { margin-top: 7px; font-size: 13px; line-height: 16px; color: #777; }
.plan ul { align-self: stretch; margin: 8px 0 5px; padding-left: 16px; text-align: left; font-size: 11px; line-height: 18px; color: #555; white-space: nowrap; }
.know { padding: 6px 12px; border-radius: 4px; background: var(--tomato); color: #fff; font-size: 11px; line-height: 15px; font-weight: 700; }
.compare { margin-top: 20px; font-size: 11px; line-height: 14px; color: #0077cc; }

/* FAQ */
.faq { padding: 87px 35px 62px 43px; background: #fafbfe; border-bottom: 1px solid #d9dade; }
.faq .heading { color: #1a202c; }
.faq-list { display: flex; flex-direction: column; gap: 11px; margin-top: 32px; }
.faq-item {
  display: flex;
  align-items: center;
  justify-content: space-between;
  height: 52px;
  padding: 0 23px 0 21px;
  border: 1px solid #e2e8f0;
  border-radius: 11px;
  background: #fff;
  box-shadow: 0 3px 8px rgba(0, 0, 0, .07);
  font-family: var(--sans);
  font-size: 12px;
  font-weight: 600;
  color: #1a202c;
  text-align: left;
}
.caret { width: 11px; height: 12px; fill: #475569; }

/* Call to action */
.cta {
  display: flex;
  flex-direction: column;
  align-items: center;
  padding: 53px 14px 29px 22px;
  background: #fff5eb;
}
.cta h2 { font-size: 30px; line-height: 34px; color: #333; }
.cta p { margin-top: 16px; font-size: 13px; line-height: 16px; color: #555; }
.join {
  height: 35px;
  margin-top: 26px;
  padding: 0 26px;
  border: 0;
  border-radius: 5px;
  background: var(--tomato);
  color: #fff;
  font-family: "Liberation Sans", Arial, sans-serif;
  font-size: 12px;
}
```
